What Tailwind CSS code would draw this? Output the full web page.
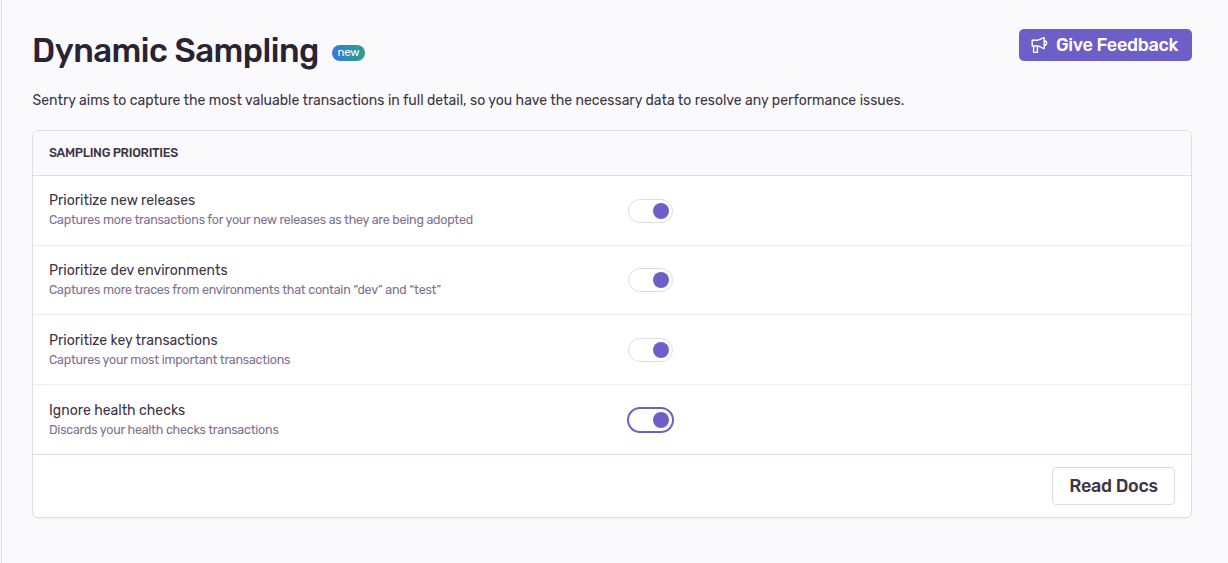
<!DOCTYPE html>
<html lang="en">
<head>
<meta charset="utf-8">
<title>Dynamic Sampling</title>
<script src="https://cdn.jsdelivr.net/npm/@tailwindcss/browser@4"></script>
</head>
<body class="bg-[#fafafc] font-['Rubik','Roboto',sans-serif] text-[#3e3446] antialiased">
<div class="h-[563px] w-[1228px] overflow-hidden pl-px">
<main class="h-full border-l border-[#e0dce5] pl-[30px] pr-9 pt-[29px]">
  <header class="flex h-[43px] items-start justify-between">
    <div class="flex items-center">
      <h1 class="whitespace-nowrap text-[33px] font-medium leading-[43px] tracking-[-0.5px] text-[#2b2233]">Dynamic Sampling</h1>
      <span class="ml-[13px] mt-[5px] flex h-4 w-[33px] items-center justify-center rounded-full bg-linear-to-r from-[#3b75da] to-[#2ba185] text-[11.5px] tracking-[-0.2px] text-white">new</span>
    </div>
    <button class="flex h-8 w-[173px] items-center rounded-[5px] bg-[#6c5fc7] pl-3 text-white">
      <svg class="h-[18px] w-[18px]" viewBox="0 0 18 18" fill="none" stroke="currentColor" stroke-width="1.4" stroke-linejoin="round" stroke-linecap="round"><path d="M1.2 4.2H6.2C9 4.2 10.3 2.2 13.2 1.6V12.6C10.3 12 9 10 6.2 10H1.2ZM2.6 10V16.4H6.4V10M13.2 4.7A2.4 2.4 0 0 1 13.2 9.5"/></svg>
      <span class="ml-[7px] whitespace-nowrap text-[18px] font-medium leading-8 tracking-[-0.28px]">Give Feedback</span>
    </button>
  </header>
  <p class="mt-[18px] whitespace-nowrap pl-[0.5px] text-[14px] leading-[22px]">Sentry aims to capture the most valuable transactions in full detail, so you have the necessary data to resolve any performance issues.</p>
  <section class="mt-[18px] h-[388px] w-[1160px] overflow-hidden rounded-md border border-[#e0dce5] bg-white shadow-[0_1px_2px_rgba(43,34,51,0.04)]">
    <h2 class="flex h-[45px] items-center border-b border-[#e0dce5] bg-[#fafafc] pl-4 text-[12.5px] font-medium tracking-[-0.3px]"><span>SAMPLING PRIORITIES</span></h2>
    <div class="flex h-[70px] items-center border-b border-[#f0ecf3] pl-4">
      <div class="w-[579px] whitespace-nowrap"><div class="text-[14px] leading-5">Prioritize new releases</div><div class="pb-[2px] text-[12.5px] leading-[17px] tracking-[-0.24px] text-[#80708f]">Captures more transactions for your new releases as they are being adopted</div></div>
      <div class="flex h-6 w-[45px] items-center justify-end rounded-full border border-[#e0dce5] pr-[3px]"><i class="size-4 rounded-full bg-[#6c5fc7]"></i></div>
    </div>
    <div class="flex h-[69px] items-center border-b border-[#f0ecf3] pl-4">
      <div class="w-[579px] whitespace-nowrap"><div class="text-[14px] leading-5">Prioritize dev environments</div><div class="pb-[2px] text-[12.5px] leading-[17px] tracking-[-0.24px] text-[#80708f]">Captures more traces from environments that contain “dev” and “test”</div></div>
      <div class="flex h-6 w-[45px] items-center justify-end rounded-full border border-[#e0dce5] pr-[3px]"><i class="size-4 rounded-full bg-[#6c5fc7]"></i></div>
    </div>
    <div class="flex h-[70px] items-center border-b border-[#f0ecf3] pl-4">
      <div class="w-[579px] whitespace-nowrap pt-px"><div class="text-[14px] leading-5">Prioritize key transactions</div><div class="pb-[2px] text-[12.5px] leading-[17px] tracking-[-0.24px] text-[#80708f]">Captures your most important transactions</div></div>
      <div class="flex h-6 w-[45px] items-center justify-end rounded-full border border-[#e0dce5] pr-[3px]"><i class="size-4 rounded-full bg-[#6c5fc7]"></i></div>
    </div>
    <div class="flex h-[70px] items-center border-b border-[#e0dce5] pl-4">
      <div class="w-[579px] whitespace-nowrap pt-px"><div class="text-[14px] leading-5">Ignore health checks</div><div class="pb-[2px] text-[12.5px] leading-[17px] tracking-[-0.24px] text-[#80708f]">Discards your health checks transactions</div></div>
      <div class="-ml-px flex h-[26px] w-[47px] items-center justify-end rounded-full border-2 border-[#6c5fc7] pr-[3px]"><i class="size-4 rounded-full bg-[#6c5fc7]"></i></div>
    </div>
    <footer class="flex h-[62px] items-center justify-end pr-4">
      <button class="h-[38px] w-[123px] whitespace-nowrap rounded-[4px] border border-[#e0dce5] text-[18px] font-medium tracking-[-0.28px]">Read Docs</button>
    </footer>
  </section>
</main>
</div>
</body>
</html>
